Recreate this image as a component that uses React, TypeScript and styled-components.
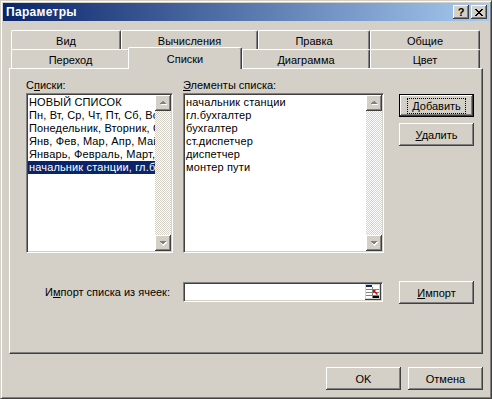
import styled, { createGlobalStyle } from "styled-components";

const GlobalStyle = createGlobalStyle`
  html, body {
    margin: 0;
    padding: 0;
    background: #d4d0c8;
  }
  body {
    font-family: "Liberation Sans", Arial, sans-serif;
    font-size: 11px;
    color: #000;
  }
  * {
    box-sizing: border-box;
  }
`;

const Window = styled.div`
  width: 492px;
  height: 399px;
  display: flex;
  flex-direction: column;
  padding: 2px;
  background: #d4d0c8;
  border: 1px solid;
  border-color: #d4d0c8 #404040 #404040 #d4d0c8;
  box-shadow: inset 1px 1px #fff, inset -1px -1px #808080;
`;

const TitleBar = styled.div`
  height: 18px;
  display: flex;
  align-items: center;
  padding: 0 2px 0 3px;
  background: linear-gradient(to right, #0a246a, #a6caf0);
`;

const Title = styled.div`
  flex: 1;
  color: #fff;
  font-weight: bold;
  font-size: 12px;
  letter-spacing: 0.3px;
`;

const CaptionButton = styled.div`
  width: 16px;
  height: 14px;
  margin-left: 2px;
  display: flex;
  align-items: center;
  justify-content: center;
  background: #d4d0c8;
  font-weight: bold;
  font-size: 11px;
  box-shadow: inset -1px -1px #404040, inset 1px 1px #fff, inset -2px -2px #808080;
`;

const Body = styled.div`
  flex: 1;
  display: flex;
  flex-direction: column;
  padding: 9px 6px 0 6px;
`;

const TabStrip = styled.div`
  margin-left: 2px;
  display: flex;
  flex-direction: column;
`;

const TabRow = styled.div`
  display: flex;
  height: 19px;
`;

const Tab = styled.div<{ $w: number; $active?: boolean }>`
  width: ${(p) => p.$w}px;
  height: ${(p) => (p.$active ? 22 : 19)}px;
  margin-top: ${(p) => (p.$active ? -2 : 0)}px;
  margin-left: ${(p) => (p.$active ? -2 : 0)}px;
  position: relative;
  z-index: ${(p) => (p.$active ? 2 : 1)};
  display: flex;
  align-items: center;
  justify-content: center;
  padding-top: ${(p) => (p.$active ? 0 : 2)}px;
  background: #d4d0c8;
  border-left: 1px solid #fff;
  border-top: 1px solid #fff;
  border-right: 1px solid #404040;
  border-top-left-radius: 2px;
  border-top-right-radius: 2px;
  box-shadow: inset -1px 0 #808080;
`;

const Panel = styled.div`
  width: 474px;
  height: 286px;
  border: 1px solid;
  border-color: #fff #404040 #404040 #fff;
  box-shadow: inset -1px -1px #808080;
  padding: 10px 0 0 16px;
  display: grid;
  grid-template-columns: 147px 201px 80px;
  grid-template-rows: 13px 160px 23px;
  column-gap: 10px;
  row-gap: 1px;
  align-content: start;
`;

const Label = styled.div<{ $right?: boolean }>`
  line-height: 13px;
  white-space: nowrap;
  text-align: ${(p) => (p.$right ? "right" : "left")};
  padding-right: ${(p) => (p.$right ? 3 : 0)}px;
`;

const Key = styled.span`
  text-decoration: underline;
`;

const ListBox = styled.div`
  display: flex;
  background: #fff;
  border: 1px solid;
  border-color: #808080 #fff #fff #808080;
  box-shadow: inset 1px 1px #404040, inset -1px -1px #d4d0c8;
  padding: 1px;
`;

const Items = styled.div`
  flex: 1;
  min-width: 0;
  overflow: hidden;
  padding-top: 1px;
`;

const Item = styled.div<{ $selected?: boolean }>`
  height: 13px;
  line-height: 13px;
  padding-left: 1px;
  white-space: nowrap;
  overflow: hidden;
  letter-spacing: 0.15px;
  background: ${(p) => (p.$selected ? "#0a246a" : "transparent")};
  color: ${(p) => (p.$selected ? "#fff" : "#000")};
`;

const Scrollbar = styled.div`
  width: 16px;
  display: flex;
  flex-direction: column;
  justify-content: space-between;
  background: repeating-conic-gradient(#fff 0 25%, #d4d0c8 0 50%) 0 0 / 2px 2px;
`;

const ArrowButton = styled.div`
  width: 16px;
  height: 16px;
  display: flex;
  align-items: center;
  justify-content: center;
  background: #d4d0c8;
  box-shadow: inset -1px -1px #404040, inset 1px 1px #fff, inset -2px -2px #808080;
`;

const ButtonStack = styled.div`
  padding: 1px 0 0 5px;
  display: flex;
  flex-direction: column;
  gap: 6px;
`;

const Button = styled.div<{ $default?: boolean }>`
  width: 75px;
  height: 23px;
  display: flex;
  align-items: center;
  justify-content: center;
  background: #d4d0c8;
  border: ${(p) => (p.$default ? "1px solid #000" : "none")};
  box-shadow: inset -1px -1px #404040, inset 1px 1px #fff, inset -2px -2px #808080;
`;

const Focus = styled.span`
  padding: 1px 4px;
  outline: 1px dotted #000;
  outline-offset: 0;
`;

const ImportRow = styled.div`
  grid-column: 1 / -1;
  margin-top: 26px;
  display: grid;
  grid-template-columns: 147px 201px 80px;
  column-gap: 10px;
  align-items: center;
`;

const RefEdit = styled.div`
  height: 20px;
  width: 200px;
  display: flex;
  justify-content: flex-end;
  background: #fff;
  border: 1px solid;
  border-color: #808080 #fff #fff #808080;
  box-shadow: inset 1px 1px #404040, inset -1px -1px #d4d0c8;
  padding: 1px;
`;

const Footer = styled.div`
  display: flex;
  justify-content: flex-end;
  gap: 7px;
  margin-top: 13px;
`;

const ArrowUp = () => (
  <svg width="7" height="5" viewBox="0 0 7 5">
    <path d="M4 1h1v1h1v1h1v1H1V3h1V2h1z" fill="#fff" />
    <path d="M3 0h1v1h1v1h1v1H0V2h1V1h1z" fill="#808080" />
  </svg>
);

const ArrowDown = () => (
  <svg width="7" height="5" viewBox="0 0 7 5">
    <path d="M1 1h6v1h-1v1h-1v1h-1v1H3V4H2V3H1z" fill="#fff" />
    <path d="M0 0h6v1H5v1H4v1H2V2H1V1H0z" fill="#808080" />
  </svg>
);

const CloseGlyph = () => (
  <svg width="8" height="7" viewBox="0 0 8 7">
    <path
      d="M0 0h2v1h1v1h2V1h1V0h2v1H7v1H6v1H5v1h1v1h1v1h1v1H6V6H5V5H3v1H2v1H0V6h1V5h1V4h1V3H2V2H1V1H0z"
      fill="#000"
    />
  </svg>
);

const RefIcon = () => (
  <svg width="16" height="16" viewBox="0 0 16 16">
    <rect x="0" y="0" width="16" height="16" fill="#d4d0c8" />
    <rect x="1" y="1" width="13" height="13" fill="#fff" />
    <rect x="1" y="1" width="6" height="2" fill="#0a246a" />
    <rect x="1" y="5" width="13" height="1" fill="#808080" />
    <rect x="1" y="8" width="13" height="1" fill="#808080" />
    <rect x="1" y="11" width="13" height="1" fill="#808080" />
    <rect x="7" y="3" width="1" height="11" fill="#808080" />
    <path d="M8 6l3 0l-1 1l3 3l-1 1l-3-3l-1 1z" fill="#e00000" />
    <rect x="8" y="12" width="6" height="2" fill="#000" />
    <rect x="15" y="0" width="1" height="16" fill="#404040" />
    <rect x="0" y="15" width="16" height="1" fill="#404040" />
  </svg>
);

const lists = [
  "НОВЫЙ СПИСОК",
  "Пн, Вт, Ср, Чт, Пт, Сб, Вс",
  "Понедельник, Вторник, Среда, Четверг",
  "Янв, Фев, Мар, Апр, Май, Июн",
  "Январь, Февраль, Март, Апрель",
  "начальник станции, гл.бухгалтер, бухгалтер",
];

const entries = [
  "начальник станции",
  "гл.бухгалтер",
  "бухгалтер",
  "ст.диспетчер",
  "диспетчер",
  "монтер пути",
];

export default function App() {
  return (
    <>
      <GlobalStyle />
      <Window>
        <TitleBar>
          <Title>Параметры</Title>
          <CaptionButton>?</CaptionButton>
          <CaptionButton>
            <CloseGlyph />
          </CaptionButton>
        </TitleBar>
        <Body>
          <TabStrip>
            <TabRow>
              <Tab $w={110}>Вид</Tab>
              <Tab $w={137}>Вычисления</Tab>
              <Tab $w={112}>Правка</Tab>
              <Tab $w={110}>Общие</Tab>
            </TabRow>
            <TabRow>
              <Tab $w={119}>Переход</Tab>
              <Tab $w={114} $active>
                Списки
              </Tab>
              <Tab $w={128}>Диаграмма</Tab>
              <Tab $w={110}>Цвет</Tab>
            </TabRow>
          </TabStrip>
          <Panel>
            <Label>
              С<Key>п</Key>иски:
            </Label>
            <Label>
              <Key>Э</Key>лементы списка:
            </Label>
            <div />
            <ListBox>
              <Items>
                {lists.map((l, i) => (
                  <Item key={l} $selected={i === lists.length - 1}>
                    {l}
                  </Item>
                ))}
              </Items>
              <Scrollbar>
                <ArrowButton>
                  <ArrowUp />
                </ArrowButton>
                <ArrowButton>
                  <ArrowDown />
                </ArrowButton>
              </Scrollbar>
            </ListBox>
            <ListBox>
              <Items>
                {entries.map((e) => (
                  <Item key={e}>{e}</Item>
                ))}
              </Items>
              <Scrollbar>
                <ArrowButton>
                  <ArrowUp />
                </ArrowButton>
                <ArrowButton>
                  <ArrowDown />
                </ArrowButton>
              </Scrollbar>
            </ListBox>
            <ButtonStack>
              <Button $default>
                <Focus>
                  <Key>Д</Key>обавить
                </Focus>
              </Button>
              <Button>
                <span>
                  <Key>У</Key>далить
                </span>
              </Button>
            </ButtonStack>
            <ImportRow>
              <Label $right>
                И<Key>м</Key>порт списка из ячеек:
              </Label>
              <RefEdit>
                <RefIcon />
              </RefEdit>
              <ButtonStack>
                <Button>
                  <span>
                    <Key>И</Key>мпорт
                  </span>
                </Button>
              </ButtonStack>
            </ImportRow>
          </Panel>
          <Footer>
            <Button>OK</Button>
            <Button>Отмена</Button>
          </Footer>
        </Body>
      </Window>
    </>
  );
}
